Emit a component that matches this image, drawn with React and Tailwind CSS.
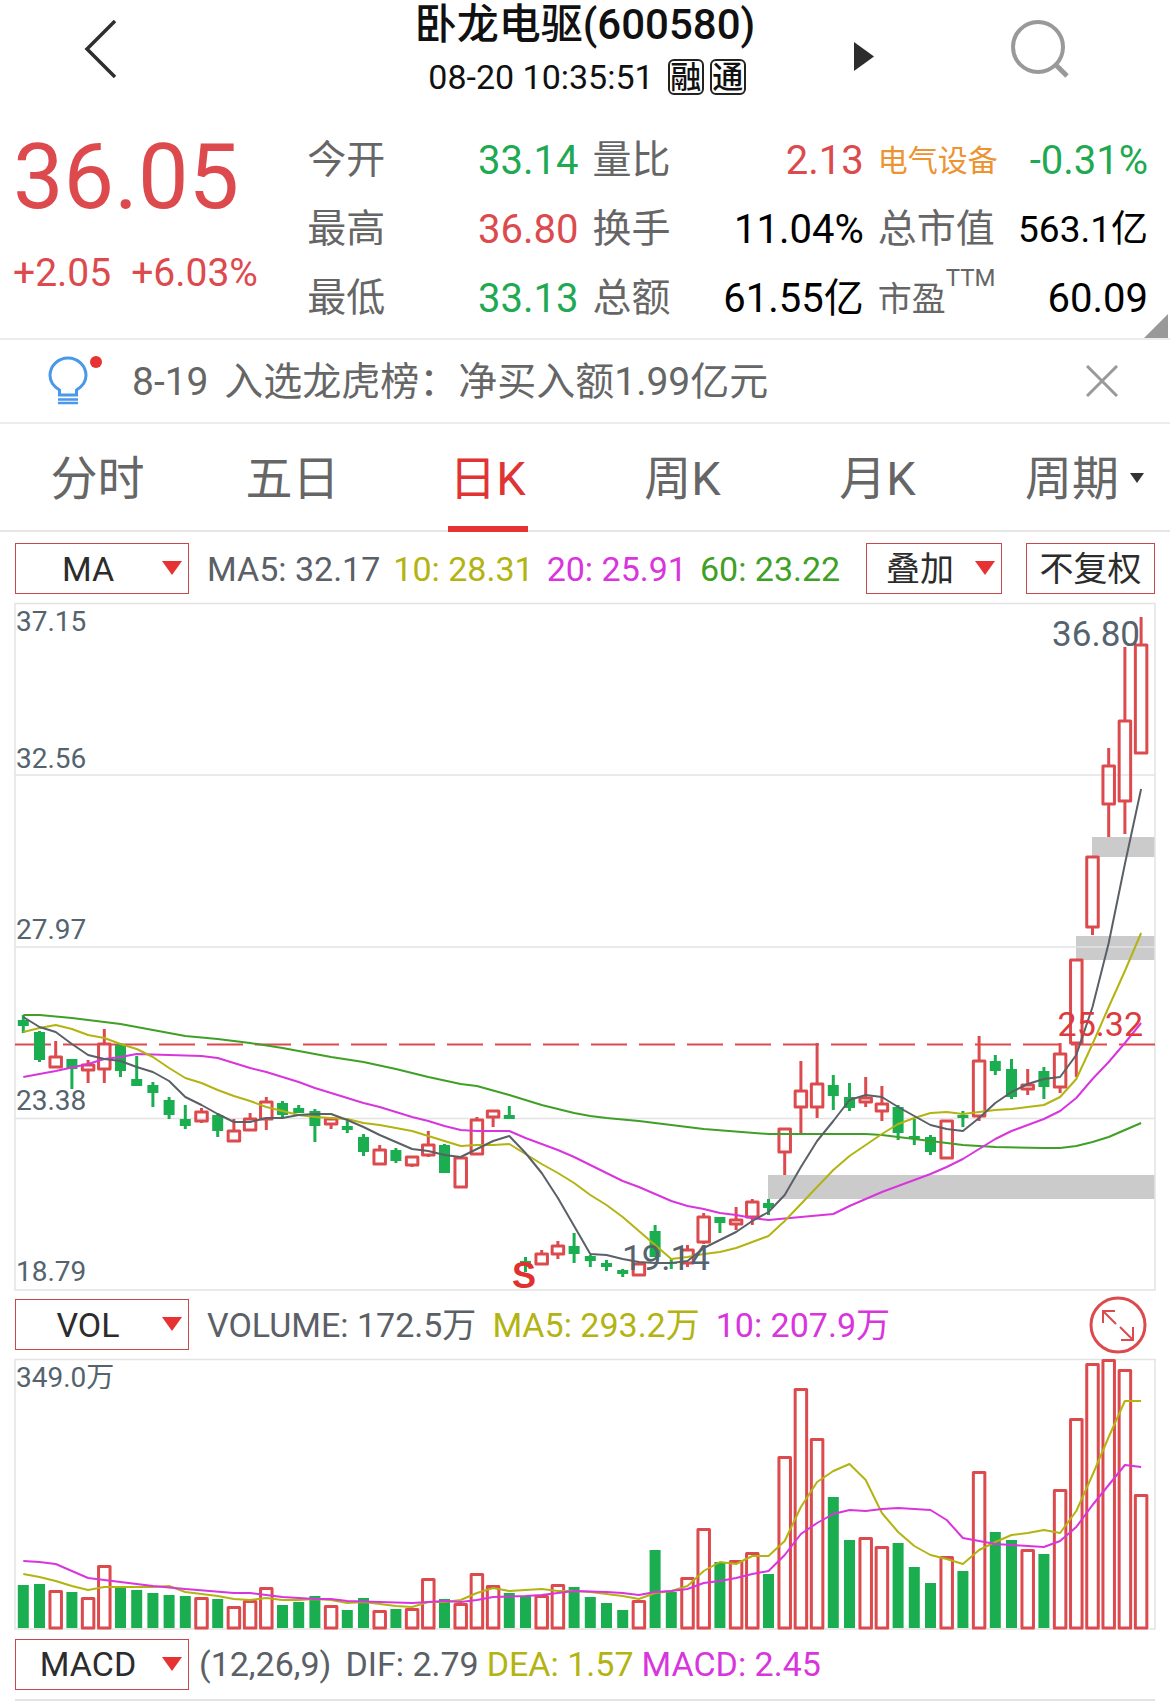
import React from "react";

const RED = "#dc4a4e";
const GREEN = "#1bae50";
const GRID = "#e3e3e3";
const MA_COLORS = { gray: "#5b6066", yellow: "#b3b311", magenta: "#d835dc", green: "#3f9f26" };

const STEP = 16.2;
const FIRST = 23.3;
const xAt = (i) => FIRST + STEP * i;

// [direction, high, body top, body bottom, low, volume top]
const BARS = [
  ["d", 1015, 1020, 1026, 1033, 1585],
  ["d", 1031, 1032, 1060, 1062, 1584],
  ["u", 1041, 1057, 1067, 1067, 1591],
  ["d", 1059, 1059, 1069, 1089, 1592],
  ["u", 1060, 1065, 1070, 1083, 1598],
  ["u", 1029, 1044, 1069, 1083, 1566],
  ["d", 1043, 1045, 1071, 1077, 1588],
  ["d", 1056, 1079, 1086, 1086, 1590],
  ["d", 1082, 1085, 1093, 1107, 1593],
  ["d", 1097, 1100, 1115, 1119, 1595],
  ["d", 1105, 1119, 1126, 1129, 1596],
  ["u", 1108, 1112, 1121, 1123, 1598],
  ["d", 1113, 1115, 1131, 1137, 1599],
  ["u", 1119, 1131, 1141, 1141, 1607],
  ["u", 1113, 1119, 1130, 1130, 1601],
  ["u", 1097, 1102, 1119, 1130, 1588],
  ["d", 1101, 1103, 1115, 1117, 1605],
  ["d", 1105, 1108, 1113, 1113, 1602],
  ["d", 1109, 1111, 1126, 1142, 1596],
  ["u", 1117, 1119, 1124, 1129, 1606],
  ["d", 1121, 1126, 1130, 1133, 1610],
  ["d", 1134, 1137, 1152, 1156, 1598],
  ["u", 1145, 1150, 1164, 1164, 1611],
  ["d", 1148, 1150, 1161, 1163, 1609],
  ["u", 1157, 1157, 1165, 1167, 1609],
  ["u", 1131, 1145, 1155, 1157, 1579],
  ["d", 1144, 1145, 1173, 1173, 1599],
  ["u", 1156, 1158, 1187, 1187, 1604],
  ["u", 1117, 1120, 1154, 1154, 1574],
  ["u", 1111, 1111, 1117, 1127, 1586],
  ["d", 1106, 1115, 1119, 1119, 1593],
  ["d", 1257, 1261, 1265, 1272, 1596],
  ["u", 1250, 1254, 1264, 1264, 1596],
  ["u", 1241, 1246, 1254, 1259, 1585],
  ["d", 1233, 1246, 1254, 1263, 1587],
  ["d", 1255, 1256, 1261, 1267, 1597],
  ["d", 1260, 1263, 1267, 1271, 1603],
  ["d", 1269, 1270, 1274, 1277, 1610],
  ["u", 1262, 1264, 1275, 1275, 1601],
  ["d", 1225, 1231, 1257, 1257, 1550],
  ["d", 1259, 1262, 1264, 1269, 1592],
  ["u", 1245, 1250, 1263, 1267, 1578],
  ["u", 1213, 1217, 1242, 1244, 1529],
  ["d", 1217, 1217, 1223, 1233, 1562],
  ["u", 1207, 1220, 1224, 1230, 1561],
  ["u", 1199, 1202, 1217, 1225, 1553],
  ["d", 1199, 1203, 1208, 1215, 1574],
  ["u", 1129, 1129, 1152, 1175, 1457],
  ["u", 1061, 1091, 1107, 1133, 1389],
  ["u", 1043, 1084, 1107, 1118, 1439],
  ["d", 1075, 1085, 1096, 1110, 1497],
  ["d", 1083, 1097, 1108, 1111, 1540],
  ["u", 1077, 1098, 1102, 1107, 1538],
  ["u", 1086, 1104, 1111, 1121, 1547],
  ["d", 1105, 1107, 1133, 1140, 1543],
  ["d", 1119, 1136, 1139, 1145, 1567],
  ["d", 1135, 1137, 1152, 1155, 1583],
  ["u", 1121, 1121, 1158, 1158, 1557],
  ["d", 1111, 1115, 1118, 1127, 1571],
  ["u", 1036, 1061, 1116, 1121, 1472],
  ["d", 1055, 1061, 1071, 1075, 1532],
  ["d", 1059, 1069, 1097, 1099, 1540],
  ["u", 1069, 1085, 1089, 1095, 1550],
  ["d", 1067, 1071, 1087, 1099, 1554],
  ["u", 1043, 1054, 1087, 1093, 1490],
  ["u", 960, 960, 1043, 1077, 1419],
  ["u", 856, 857, 927, 935, 1364],
  ["u", 748, 766, 804, 837, 1360],
  ["u", 647, 721, 801, 834, 1370],
  ["u", 617, 645, 753, 753, 1495],
];

const MA5 = [1017,1027,1032,1044,1055,1059,1061,1067,1072,1081,1097,1105,1114,1122,1122,1118,1118,1115,1114,1114,1120,1127,1135,1142,1149,1151,1155,1157,1149,1141,1136,1153,1173,1198,1226,1254,1255,1259,1262,1263,1263,1261,1248,1240,1232,1221,1212,1195,1167,1141,1121,1100,1095,1097,1107,1116,1125,1129,1131,1118,1103,1092,1084,1079,1077,1055,1007,943,864,789];
const MA10 = [1032,1028,1025,1029,1035,1038,1044,1049,1057,1068,1078,1083,1090,1096,1101,1107,1111,1115,1117,1118,1119,1123,1125,1128,1131,1136,1141,1146,1145,1145,1144,1154,1164,1173,1183,1195,1205,1217,1231,1245,1259,1257,1254,1252,1248,1242,1236,1221,1204,1187,1170,1156,1145,1134,1124,1118,1113,1112,1114,1112,1110,1109,1107,1105,1097,1079,1044,1007,971,933];
const MA20 = [1077,,1071,,1064,1059,1057,1054,,1055,,1056,1058,1063,1068,1072,1077,1082,1088,1093,1098,1103,1107,1112,1117,1121,1126,1130,1131,,1131,1138,1144,1150,1157,1165,1173,1181,1187,1194,1201,1206,1209,1213,1215,1218,1220,,1217,,1214,1206,1199,1192,1186,1180,1174,1167,1159,1149,1139,1131,1125,1119,1111,1098,1079,1062,1043,1023];
const MA60 = [1015,1015,,1018,1020,,1024,,1030,,1036,,1039,,1043,,1048,1051,,1057,,1062,,1069,,1077,,1084,1086,,1095,,1105,,1113,1116,1118,,1121,,1125,,1129,,,,1134,,,,1134,,1134,1135,,1139,,,1145,,1147,,,1148,1148,1146,1142,1137,1130,1123];
const VMA5 = [1574,1577,1581,1586,1590,1587,,1587,1587,1586,1592,1594,1596,1599,1600,1598,1600,1600,1599,1600,1603,1602,1604,1606,1607,1602,1602,1600,1593,1588,1591,1590,1589,1591,1591,1592,1594,1596,1599,1593,1591,1586,1571,1562,1564,1556,1556,1541,1507,1482,1471,1464,1480,1513,1532,1546,1555,1559,1564,1550,1542,1535,1533,1530,1533,1511,1475,1437,1401,1401];
const VMA10 = [1561,1562,1564,1571,1578,1580,,1584,1586,,1589,,,1593,1593,,1597,,1599,1599,1601,,1602,,1603,,1601,1602,1600,1597,,1596,1595,1593,1591,,1592,1593,1595,1592,1591,1589,1583,1581,1578,1574,1571,1555,1534,1523,1514,1510,1511,1509,1508,,1510,1520,1538,1541,1544,1545,,1547,1541,1527,1505,1485,1465,1467];

function Line({ data, color }) {
  const pts = [];
  data.forEach((y, i) => pts.push(`${xAt(i).toFixed(1)},${y}`));
  return <polyline points={pts.join(" ")} fill="none" stroke={color} strokeWidth="2" strokeLinejoin="round" />;
}

function Candle({ bar, i }) {
  const [dir, high, top, bottom, low] = bar;
  const x = xAt(i);
  if (dir === "d") {
    return (
      <g fill={GREEN}>
        <rect x={x - 1.5} y={high} width="3" height={low - high} />
        <rect x={x - 5.5} y={top} width="11" height={bottom - top} />
      </g>
    );
  }
  return (
    <g fill="none" stroke={RED} strokeWidth="3" strokeLinejoin="round">
      {high < top && <line x1={x} x2={x} y1={high} y2={top} />}
      {low > bottom && <line x1={x} x2={x} y1={bottom} y2={low} />}
      <rect x={x - 5.75} y={top} width="11.5" height={bottom - top} />
    </g>
  );
}

function PriceChart() {
  return (
    <svg viewBox="15 603 1140 687" className="block h-auto w-full overflow-visible font-[Roboto,'Noto_Sans_CJK_SC',sans-serif]" role="img" aria-label="日K">
      <g fill="#cbcbcb">
        <rect x="1092" y="837" width="63" height="20" />
        <rect x="1076" y="936" width="79" height="24" />
        <rect x="768" y="1175" width="387" height="24" />
      </g>
      <g stroke={GRID} strokeWidth="1.5" fill="none">
        <rect x="15" y="603.5" width="1140" height="686.5" />
        <path d="M15 775H1155M15 947H1155M15 1118.5H1155" />
      </g>
      <path d="M15 1044.5H1155" stroke="#dc4a4e" strokeWidth="2" strokeDasharray="36 12" />
      {BARS.map((b, i) => <Candle key={i} bar={b} i={i} />)}
      <Line data={MA60} color={MA_COLORS.green} />
      <Line data={MA20} color={MA_COLORS.magenta} />
      <Line data={MA10} color={MA_COLORS.yellow} />
      <Line data={MA5} color={MA_COLORS.gray} />
      <g fill="#54636e" fontSize="28">
        <text x="16" y="631">37.15</text>
        <text x="16" y="768">32.56</text>
        <text x="16" y="939">27.97</text>
        <text x="16" y="1110">23.38</text>
        <text x="16" y="1281">18.79</text>
      </g>
      <g fontSize="35">
        <text x="1140" y="646" textAnchor="end" fill="#54636e">36.80</text>
        <text x="1143" y="1036" textAnchor="end" fill="#dc3a3e" fontSize="34">25.32</text>
        <text x="622" y="1270" fill="#54636e">19.14</text>
      </g>
      <text x="512" y="1288" fontSize="36" fontWeight="700" fill="#e03030" className="font-['Liberation_Sans',sans-serif]">S</text>
    </svg>
  );
}

function VolumeChart() {
  return (
    <svg viewBox="15 1359 1140 270" className="block h-auto w-full overflow-visible font-[Roboto,'Noto_Sans_CJK_SC',sans-serif]" role="img" aria-label="VOL">
      <rect x="15" y="1359.5" width="1140" height="269.5" fill="none" stroke={GRID} strokeWidth="1.5" />
      {BARS.map(([dir, , , , , top], i) =>
        dir === "d" ? (
          <rect key={i} x={xAt(i) - 5.5} y={top} width="11" height={1628 - top} fill={GREEN} />
        ) : (
          <rect key={i} x={xAt(i) - 5.75} y={top + 0.5} width="11.5" height={1627.5 - top} fill="none" stroke={RED} strokeWidth="3" strokeLinejoin="round" />
        )
      )}
      <Line data={VMA5} color={MA_COLORS.yellow} />
      <Line data={VMA10} color={MA_COLORS.magenta} />
      <text x="16" y="1387" fontSize="28" fill="#54636e">349.0万</text>
    </svg>
  );
}

function Picker({ label, options, wide }) {
  return (
    <div className={wide ? "relative w-[174px] shrink-0" : "relative w-[136px] shrink-0"}>
      <select
        aria-label={label}
        defaultValue={options[0]}
        className="block h-[51px] w-full appearance-none border border-[#c9484d] bg-white pr-7 pl-0 text-center text-[34px] leading-[48px] text-[#2c2c2c] outline-none [text-align-last:center]"
      >
        {options.map((o) => <option key={o}>{o}</option>)}
      </select>
      <svg viewBox="0 0 20 14" className="pointer-events-none absolute top-[18px] right-[7px] h-[14px] w-5" aria-hidden="true">
        <path d="M0 0H20L10 14Z" fill="#e63232" />
      </svg>
    </div>
  );
}

function Cell({ label, value, labelClass = "text-[39px] text-[#666]", valueClass = "text-[40px] text-black" }) {
  return (
    <div className="flex h-[69px] items-center justify-between whitespace-nowrap">
      <dt className={labelClass}>{label}</dt>
      <dd className={valueClass}>{value}</dd>
    </div>
  );
}

const UP = "text-[40px] text-[#dc4a4e]";
const DOWN = "text-[40px] text-[#1fa952]";

export default function App() {
  const tabs = ["分时", "五日", "日K", "周K", "月K"];
  return (
    <main className="w-full overflow-hidden bg-white font-[Roboto,'Noto_Sans_CJK_SC',sans-serif] leading-none">
      <header className="grid h-[112px] grid-cols-[1fr_auto_1fr]">
        <div className="pt-5 pl-[84px]">
          <button aria-label="返回" className="block">
            <svg width="34" height="58" viewBox="0 0 34 58" fill="none" stroke="#2e2e2e" strokeWidth="3.5">
              <path d="M31 1L3 29L31 57" />
            </svg>
          </button>
        </div>
        <div className="text-center">
          <h1 className="h-[50px] text-[42px] leading-[50px] font-medium text-[#111]">卧龙电驱(600580)</h1>
          <div className="flex h-[54px] items-center justify-center gap-[6px] pl-1 text-[34px] text-[#111]">
            <time className="mr-2">08-20 10:35:51</time>
            <span className="flex h-9 w-9 items-center justify-center rounded-md border-2 border-[#222] text-[31px] font-medium">融</span>
            <span className="flex h-9 w-9 items-center justify-center rounded-md border-2 border-[#222] text-[31px] font-medium">通</span>
          </div>
        </div>
        <div className="flex items-start justify-between pt-[18px] pr-[100px] pl-[98px]">
          <button aria-label="下一只" className="mt-6">
            <svg width="22" height="29" viewBox="0 0 22 29"><path d="M1 0L21 14.5L1 29Z" fill="#2d2d2d" /></svg>
          </button>
          <button aria-label="搜索">
            <svg width="60" height="60" viewBox="0 0 60 60" fill="none" stroke="#999" strokeWidth="4">
              <circle cx="28" cy="29" r="25" />
              <path d="M45 46L57 58" strokeWidth="5" />
            </svg>
          </button>
        </div>
      </header>

      <section className="relative grid h-[228px] grid-cols-[293fr_271fr_271fr_270fr] gap-x-[14px] border-b-2 border-[#ececec] pt-[14px] pr-[22px]">
        <div className="pl-[13px] whitespace-nowrap text-[#dc4a4e]">
          <div className="pt-[6px] text-[90px] leading-[92px]">36.05</div>
          <div className="mt-[29px] flex gap-5 text-[39px] leading-[40px]">
            <span>+2.05</span>
            <span>+6.03%</span>
          </div>
        </div>
        <dl>
          <Cell label="今开" value="33.14" valueClass={DOWN} />
          <Cell label="最高" value="36.80" valueClass={UP} />
          <Cell label="最低" value="33.13" valueClass={DOWN} />
        </dl>
        <dl>
          <Cell label="量比" value="2.13" valueClass={UP} />
          <Cell label="换手" value="11.04%" />
          <Cell label="总额" value="61.55亿" />
        </dl>
        <dl>
          <Cell label="电气设备" labelClass="text-[30px] text-[#ec9332]" value="-0.31%" valueClass={DOWN} />
          <Cell label="总市值" value="563.1亿" valueClass="text-[37px] text-black" />
          <Cell
            label={<span className="flex">市盈<span className="-mt-4 text-[24px]">TTM</span></span>}
            labelClass="text-[34px] text-[#666]"
            value="60.09"
          />
        </dl>
        <svg width="24" height="24" viewBox="0 0 24 24" className="absolute right-[2px] bottom-0" aria-hidden="true">
          <path d="M24 0V24H0Z" fill="#999" />
        </svg>
      </section>

      <section className="flex h-[84px] items-center border-b-2 border-[#ececec] pr-[52px] pl-[48px] text-[39px] text-[#666]">
        <svg width="56" height="50" viewBox="0 0 56 50" className="shrink-0" fill="none" stroke="#4a98ea" strokeWidth="3" aria-hidden="true">
          <path d="M11.500 39V34C5 30 2 25 2 19.500A18 17.500 0 0 1 38 19.500C38 25 35 30 28.500 34V39Z" />
          <path d="M10 43.500H30M10 47H30" strokeWidth="2.500" />
          <circle cx="48" cy="6" r="6" fill="#e63232" stroke="none" />
        </svg>
        <p className="ml-[28px] flex-1 pt-[2px] whitespace-nowrap"><time className="mr-[6px]">8-19</time> 入选龙虎榜：净买入额1.99亿元</p>
        <button aria-label="关闭">
          <svg width="32" height="32" viewBox="0 0 32 32" stroke="#999" strokeWidth="3"><path d="M1 1L31 31M31 1L1 31" /></svg>
        </button>
      </section>

      <nav className="grid h-[108px] grid-cols-6 border-b-2 border-[#e6e6e6] text-[47px] text-[#666]">
        {tabs.map((t) =>
          t === "日K" ? (
            <button key={t} className="relative pt-[2px] text-[#e03434]">
              {t}
              <span className="absolute -bottom-[2px] left-1/2 h-[6px] w-20 -translate-x-1/2 bg-[#e63232]" />
            </button>
          ) : (
            <button key={t} className="pt-[2px]">{t}</button>
          )
        )}
        <button className="flex items-center justify-center gap-[11px] pt-[2px] pl-6">
          周期
          <svg width="14" height="10" viewBox="0 0 14 10" aria-hidden="true"><path d="M0 0H14L7 10Z" fill="#333" /></svg>
        </button>
      </nav>

      <div className="px-[15px]">
        <div className="flex h-[71px] items-center gap-4 pt-[2px] text-[34px] whitespace-nowrap text-[#5b6066]">
          <Picker label="均线" options={["MA", "BOLL"]} wide />
          <div className="flex flex-1 gap-[13px] pl-[2px]">
            <span>MA5: 32.17</span>
            <span className="text-[#b3b311]">10: 28.31</span>
            <span className="text-[#d835dc]">20: 25.91</span>
            <span className="text-[#3f9f26]">60: 23.22</span>
          </div>
          <Picker label="叠加" options={["叠加"]} />
          <button className="ml-2 h-[51px] w-[129px] shrink-0 border border-[#c9484d] text-[34px] text-[#2c2c2c]">不复权</button>
        </div>
        <PriceChart />
        <div className="flex h-[69px] items-center gap-4 text-[34px] whitespace-nowrap text-[#5b6066]">
          <Picker label="成交量指标" options={["VOL", "AMO"]} wide />
          <div className="flex flex-1 gap-4 pl-[2px]">
            <span>VOLUME: 172.5万</span>
            <span className="text-[#b3b311]">MA5: 293.2万</span>
            <span className="text-[#d835dc]">10: 207.9万</span>
          </div>
          <button aria-label="全屏" className="mr-2">
            <svg width="58" height="58" viewBox="0 0 58 58" fill="none" stroke="#dc4a4e" strokeWidth="2.5">
              <circle cx="29" cy="29" r="27" strokeWidth="3" />
              <path d="M14 27V15H26M14 15L27 28M44 31V44H32M44 44L31 31" strokeWidth="2" />
            </svg>
          </button>
        </div>
        <VolumeChart />
        <div className="flex h-[70px] items-center gap-[10px] text-[34px] whitespace-nowrap text-[#5b6066]">
          <Picker label="副图指标" options={["MACD", "KDJ"]} wide />
          <div className="flex gap-2">
            <span className="mr-[6px]">(12,26,9)</span>
            <span>DIF: 2.79</span>
            <span className="text-[#b3b311]">DEA: 1.57</span>
            <span className="text-[#d835dc]">MACD: 2.45</span>
          </div>
        </div>
        <div className="h-[2px] border-t-2 border-[#e3e3e3]" />
      </div>
    </main>
  );
}
